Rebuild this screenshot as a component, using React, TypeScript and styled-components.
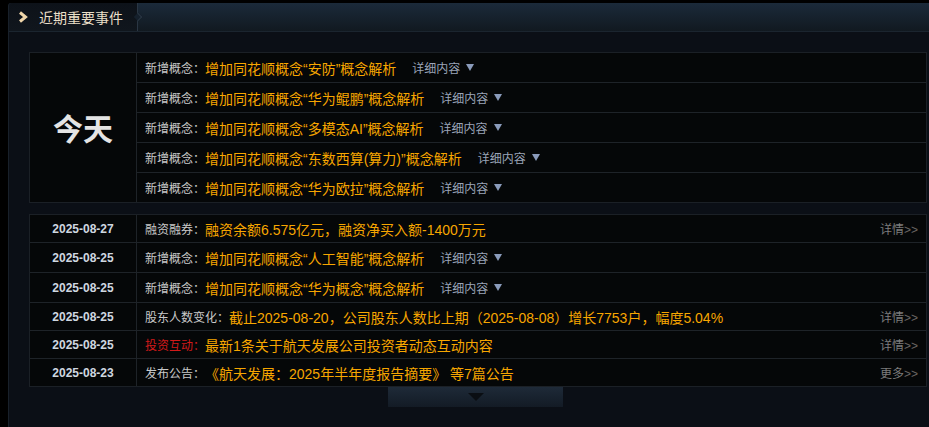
import styled, { createGlobalStyle } from 'styled-components'

const GlobalStyle = createGlobalStyle`
    html, body {
        margin: 0;
        padding: 0;
        background: #000;
    }
    body {
        font-family: "Liberation Sans", "Noto Sans CJK SC", sans-serif;
    }
`

const Panel = styled.div`
    margin: 3px 0 0 8px;
    min-height: 424px;
    background: #0b0f16;
    border-left: 1px solid #18202a;
    border-radius: 3px 0 0 0;
    overflow: hidden;
`

const Header = styled.div`
    display: flex;
    height: 28px;
    background: linear-gradient(#1b2a3a, #111920);
    border-bottom: 1px solid #1b252f;
`

const Tab = styled.div`
    position: relative;
    display: flex;
    align-items: center;
    gap: 11px;
    width: 119px;
    padding-left: 9px;
    background: linear-gradient(#0d1219, #10161d);
    border-right: 1px solid #2a3643;
    color: #eadfc8;
    font-size: 14px;

    &::after {
        content: '';
        position: absolute;
        right: -4px;
        top: 11px;
        width: 5px;
        height: 5px;
        border-top: 1px solid #2a3643;
        border-right: 1px solid #2a3643;
        background: #15202c;
        transform: rotate(45deg);
    }
`

const Content = styled.div`
    padding: 20px 2px 0 20px;
`

const Table = styled.div<{ $gap?: boolean }>`
    display: grid;
    grid-template-columns: 107px 1fr;
    background: #050708;
    border: 1px solid #1b2026;
    margin-top: ${p => (p.$gap ? '11px' : '0')};
`

const TodayCell = styled.div`
    display: flex;
    align-items: center;
    justify-content: center;
    padding-bottom: 2px;
    border-right: 1px solid #1e2328;
    color: #e4e4e4;
    font-size: 30px;
    font-weight: bold;
`

const Rows = styled.div`
    display: flex;
    flex-direction: column;
`

const Row = styled.div<{ $tall?: boolean }>`
    display: flex;
    align-items: center;
    height: ${p => (p.$tall ? '29px' : '27px')};
    padding: 0 8px;
    border-bottom: 1px solid #1e2328;
    white-space: nowrap;

    &:last-child {
        border-bottom: none;
    }
`

const DateCell = styled.div<{ $tall?: boolean }>`
    display: flex;
    align-items: center;
    justify-content: center;
    height: ${p => (p.$tall ? '29px' : '27px')};
    border-right: 1px solid #1e2328;
    border-bottom: 1px solid #1e2328;
    color: #cfd7e0;
    font-size: 12px;
    font-weight: bold;

    &:nth-last-child(2) {
        border-bottom: none;
    }
`

const EventCell = styled(Row)`
    &:last-child {
        border-bottom: none;
    }
`

const Label = styled.span<{ $red?: boolean }>`
    color: ${p => (p.$red ? '#d21a1a' : '#c9c9c9')};
    font-size: 12px;
`

const Title = styled.span`
    color: #f7a600;
    font-size: 14px;
`

const Detail = styled.span`
    display: flex;
    align-items: center;
    gap: 6px;
    margin-left: 16px;
    color: #9ba5b8;
    font-size: 12px;
`

const Caret = styled.span`
    width: 0;
    height: 0;
    border-left: 4px solid transparent;
    border-right: 4px solid transparent;
    border-top: 7px solid #8a9bbb;
`

const More = styled.span`
    margin-left: auto;
    color: #7c7c7c;
    font-size: 12px;

    & b {
        font-weight: normal;
        color: #6a6662;
    }
`

const Footer = styled.div`
    display: flex;
    justify-content: center;
    padding-right: 5px;
`

const ShowMore = styled.div`
    display: flex;
    justify-content: center;
    padding-top: 6px;
    width: 175px;
    height: 14px;
    background: linear-gradient(#1e2a38, #131b25);
`

const DownArrow = styled.span`
    width: 0;
    height: 0;
    border-left: 8px solid transparent;
    border-right: 8px solid transparent;
    border-top: 8px solid #0a0e13;
`

const Chevron = () => (
    <svg width="10" height="12" viewBox="0 0 10 12">
        <path d="M2 1.5 L7.5 6 L2 10.5" fill="none" stroke="#f0d6aa" strokeWidth="3" />
    </svg>
)

const today = ['安防', '华为鲲鹏', '多模态AI', '东数西算(算力)', '华为欧拉']

interface EventItem {
    date: string;
    label: string;
    text: string;
    red?: boolean;
    detail?: boolean;
    link?: string;
}

const events: EventItem[] = [
    { date: '2025-08-27', label: '融资融券：', text: '融资余额6.575亿元，融资净买入额-1400万元', link: '详情' },
    { date: '2025-08-25', label: '新增概念：', text: '增加同花顺概念“人工智能”概念解析', detail: true },
    { date: '2025-08-25', label: '新增概念：', text: '增加同花顺概念“华为概念”概念解析', detail: true },
    { date: '2025-08-25', label: '股东人数变化：', text: '截止2025-08-20，公司股东人数比上期（2025-08-08）增长7753户，幅度5.04%', link: '详情' },
    { date: '2025-08-25', label: '投资互动：', text: '最新1条关于航天发展公司投资者动态互动内容', red: true, link: '详情' },
    { date: '2025-08-23', label: '发布公告：', text: '《航天发展：2025年半年度报告摘要》 等7篇公告', link: '更多' },
]

export default function App() {
    return (
        <>
            <GlobalStyle />
            <Panel>
                <Header>
                    <Tab>
                        <Chevron />
                        近期重要事件
                    </Tab>
                </Header>
                <Content>
                    <Table>
                        <TodayCell>今天</TodayCell>
                        <Rows>
                            {today.map(name => (
                                <Row $tall key={name}>
                                    <Label>新增概念：</Label>
                                    <Title>增加同花顺概念“{name}”概念解析</Title>
                                    <Detail>详细内容<Caret /></Detail>
                                </Row>
                            ))}
                        </Rows>
                    </Table>

                    <Table $gap>
                        {events.map((ev, i) => (
                            <Ev key={i} ev={ev} />
                        ))}
                    </Table>

                    <Footer>
                        <ShowMore><DownArrow /></ShowMore>
                    </Footer>
                </Content>
            </Panel>
        </>
    )
}

const Ev = ({ ev }: { ev: EventItem }) => (
    <>
        <DateCell $tall={ev.detail}>{ev.date}</DateCell>
        <EventCell $tall={ev.detail}>
            <Label $red={ev.red}>{ev.label}</Label>
            <Title>{ev.text}</Title>
            {ev.detail && <Detail>详细内容<Caret /></Detail>}
            {ev.link && <More>{ev.link}<b>&gt;&gt;</b></More>}
        </EventCell>
    </>
)
